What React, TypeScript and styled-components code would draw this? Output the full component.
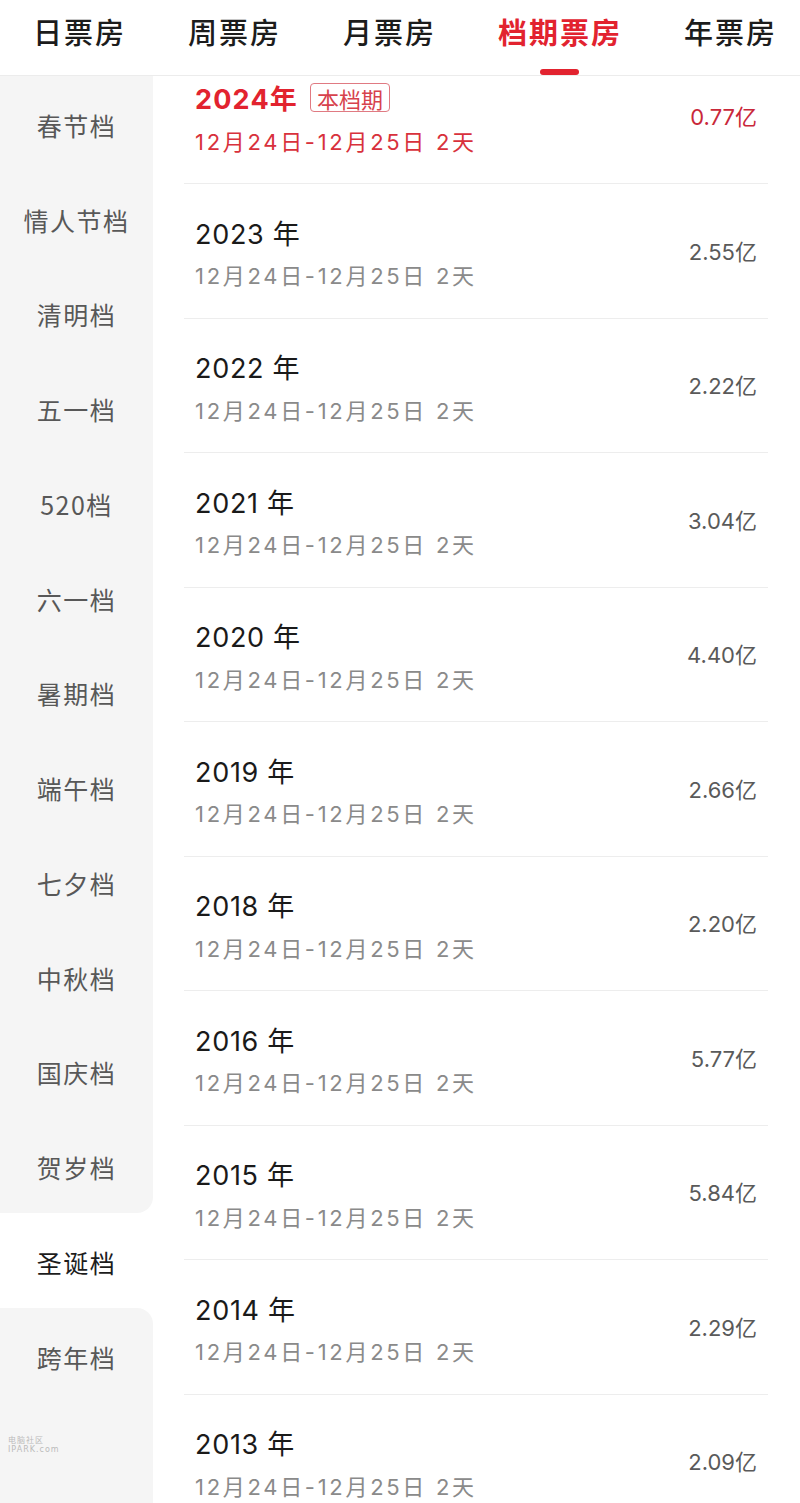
import React from "react";
import styled, { createGlobalStyle } from "styled-components";

// Data.
const tabs = ["日票房", "周票房", "月票房", "档期票房", "年票房"];
const activeTab = 3;

const seasons = [
  "春节档",
  "情人节档",
  "清明档",
  "五一档",
  "520档",
  "六一档",
  "暑期档",
  "端午档",
  "七夕档",
  "中秋档",
  "国庆档",
  "贺岁档",
  "圣诞档",
  "跨年档",
];
const activeSeason = 12;

const years = [
  { year: "2024", amount: "0.77" },
  { year: "2023", amount: "2.55" },
  { year: "2022", amount: "2.22" },
  { year: "2021", amount: "3.04" },
  { year: "2020", amount: "4.40" },
  { year: "2019", amount: "2.66" },
  { year: "2018", amount: "2.20" },
  { year: "2016", amount: "5.77" },
  { year: "2015", amount: "5.84" },
  { year: "2014", amount: "2.29" },
  { year: "2013", amount: "2.09" },
];

const RED = "#e2232f";
const FONT = `"Inter", "Noto Sans CJK SC", "Noto Sans", sans-serif`;

// Style.
const GlobalStyle = createGlobalStyle`
  html, body {
    margin: 0;
    padding: 0;
    background: #fff;
    font-family: ${FONT};
    -webkit-font-smoothing: antialiased;
  }
`;

const Page = styled.div`
  position: relative;
  width: 800px;
  height: 1503px;
  overflow: hidden;
  display: flex;
  flex-direction: column;
  background: #fff;
`;

const TabBar = styled.div`
  height: 76px;
  flex-shrink: 0;
  display: flex;
  align-items: flex-start;
  gap: 62px;
  padding-left: 33px;
  box-sizing: border-box;
  border-bottom: 1px solid #ececec;
`;

const Tab = styled.div<{ $active?: boolean }>`
  position: relative;
  height: 75px;
  padding-top: 10px;
  box-sizing: border-box;
  font-family: "Noto Sans CJK SC", sans-serif;
  font-size: 29px;
  line-height: 42px;
  letter-spacing: 2px;
  white-space: nowrap;
  font-weight: ${(p) => (p.$active ? 700 : 500)};
  color: ${(p) => (p.$active ? RED : "#1c1c1c")};
`;

const TabLine = styled.span`
  position: absolute;
  left: 50%;
  bottom: 0;
  width: 39px;
  height: 6px;
  margin-left: -20px;
  border-radius: 3px;
  background: ${RED};
`;

const Body = styled.div`
  flex: 1;
  display: flex;
  overflow: hidden;
`;

const Sidebar = styled.div`
  width: 153px;
  flex-shrink: 0;
  display: flex;
  flex-direction: column;
  background: #fff;
`;

const SideItem = styled.div<{ $active?: boolean; $before?: boolean; $after?: boolean }>`
  height: 94.75px;
  flex-shrink: 0;
  display: flex;
  align-items: center;
  justify-content: center;
  padding-top: 3px;
  box-sizing: border-box;
  font-family: "Noto Sans CJK SC", sans-serif;
  font-size: 25px;
  letter-spacing: 1.5px;
  background: ${(p) => (p.$active ? "#fff" : "#f5f5f5")};
  color: ${(p) => (p.$active ? "#1c1c1c" : "#585858")};
  border-bottom-right-radius: ${(p) => (p.$before ? "16px" : "0")};
  border-top-right-radius: ${(p) => (p.$after ? "16px" : "0")};
`;

const SideFill = styled.div`
  flex: 1;
  background: #f5f5f5;
`;

const Main = styled.div`
  flex: 1;
  overflow: hidden;
  padding: 0 32px 0 31px;
`;

const List = styled.div`
  margin-top: -26.5px;
`;

const Row = styled.div`
  height: 134.5px;
  box-sizing: border-box;
  display: flex;
  align-items: flex-start;
  padding: 28px 11px 0 11px;
  border-bottom: 1px solid #ededed;
`;

const Info = styled.div`
  flex: 1;
  display: flex;
  flex-direction: column;
`;

const YearLine = styled.div`
  display: flex;
  align-items: center;
  height: 40px;
`;

const Year = styled.span<{ $current?: boolean }>`
  font-size: 27px;
  letter-spacing: ${(p) => (p.$current ? "1.2px" : "0.7px")};
  font-weight: ${(p) => (p.$current ? 700 : 400)};
  color: ${(p) => (p.$current ? RED : "#1a1a1a")};
`;

const Badge = styled.span`
  margin-left: 12px;
  height: 29px;
  padding: 0 6px;
  display: inline-flex;
  align-items: center;
  box-sizing: border-box;
  border: 1.5px solid #e07a82;
  border-radius: 4px;
  font-family: "Noto Sans CJK SC", sans-serif;
  font-size: 22px;
  color: #d7424c;
`;

const DateText = styled.div<{ $current?: boolean }>`
  margin-top: 8px;
  font-size: 22px;
  line-height: 32px;
  letter-spacing: 2.7px;
  white-space: nowrap;
  color: ${(p) => (p.$current ? "#d8313c" : "#8a8a8a")};
`;

const Amount = styled.div<{ $current?: boolean }>`
  align-self: center;
  margin-top: -30px;
  font-size: 22px;
  color: ${(p) => (p.$current ? "#c9283a" : "#5a5a5a")};
`;

const Watermark = styled.div`
  position: absolute;
  left: 8px;
  top: 1436px;
  font-size: 8px;
  line-height: 9px;
  color: #bbb;
  font-family: "DejaVu Sans", "Noto Sans CJK SC", sans-serif;
  letter-spacing: 1px;
`;

const App: React.FC = () => {
  return (
    <Page>
      <GlobalStyle />
      <TabBar>
        {tabs.map((t, i) => (
          <Tab key={t} $active={i === activeTab}>
            {t}
            {i === activeTab && <TabLine />}
          </Tab>
        ))}
      </TabBar>
      <Body>
        <Sidebar>
          {seasons.map((s, i) => (
            <SideItem
              key={s}
              $active={i === activeSeason}
              $before={i === activeSeason - 1}
              $after={i === activeSeason + 1}
            >
              {s}
            </SideItem>
          ))}
          <SideFill />
        </Sidebar>
        <Main>
          <List>
            {years.map((y, i) => {
              const current = i === 0;
              return (
                <Row key={y.year}>
                  <Info>
                    <YearLine>
                      <Year $current={current}>
                        {current ? `${y.year}年` : `${y.year} 年`}
                      </Year>
                      {current && <Badge>本档期</Badge>}
                    </YearLine>
                    <DateText $current={current}>
                      12月24日-12月25日 2天
                    </DateText>
                  </Info>
                  <Amount $current={current}>{y.amount}亿</Amount>
                </Row>
              );
            })}
          </List>
        </Main>
      </Body>
      <Watermark>
        电脑社区
        <br />
        IPARK.com
      </Watermark>
    </Page>
  );
};

export default App;
